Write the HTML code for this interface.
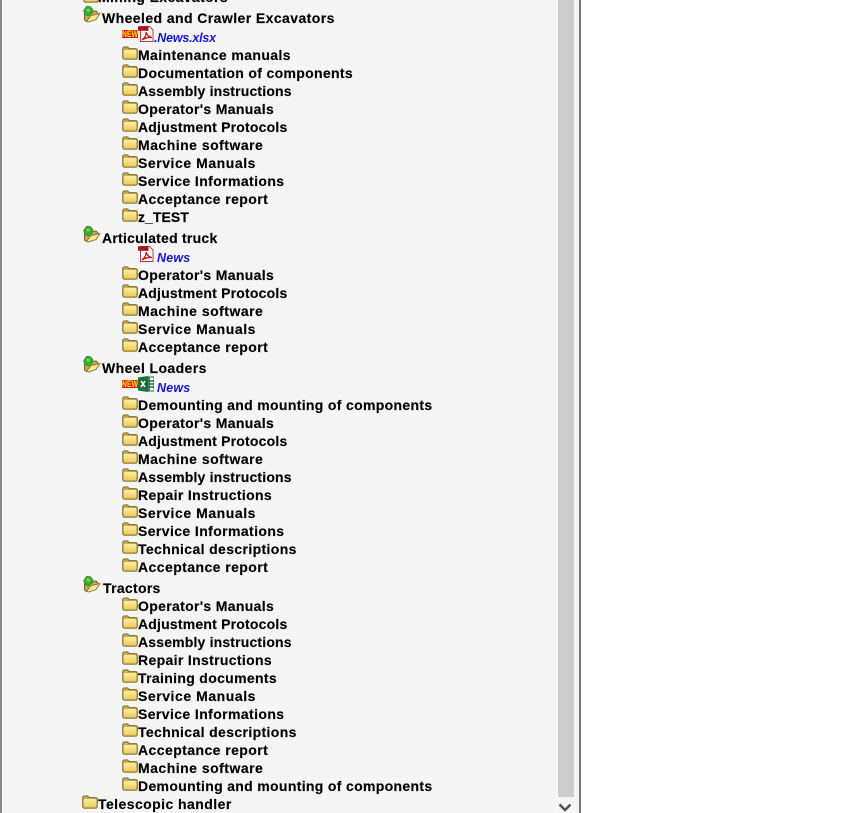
<!DOCTYPE html>
<html><head><meta charset="utf-8">
<style>
html,body{margin:0;padding:0;width:866px;height:813px;overflow:hidden;background:#f5f5f5}
body{position:relative;font-family:"Liberation Sans",Arial,sans-serif}
.t{position:absolute;white-space:nowrap;font-weight:bold;font-size:14px;line-height:16px;color:#000;letter-spacing:.4px;-webkit-text-stroke:.15px #000}
.n{position:absolute;white-space:nowrap;font-weight:bold;font-style:italic;font-size:12.5px;line-height:14px;color:#1515d0}
svg.i{position:absolute;overflow:visible}
.b{position:absolute;top:0;height:813px}
.new{position:absolute;width:16px;height:8px;background:#e01010;overflow:hidden}
.new span{position:absolute;left:0;top:0;color:#ffe81a;font-size:9px;line-height:8px;font-weight:bold;white-space:nowrap;transform-origin:0 0;transform:scaleX(.76)}
.mm{letter-spacing:.39px}.dc{letter-spacing:.33px}.as{letter-spacing:.17px}.op{letter-spacing:.33px}.ad{letter-spacing:.2px}
.ms{letter-spacing:.49px}.sm{letter-spacing:.55px}.si{letter-spacing:.4px}.ar{letter-spacing:.43px}.zt{letter-spacing:.05px}
.rp{letter-spacing:.34px}.td{letter-spacing:.37px}.tr{letter-spacing:.33px}
</style></head><body>
<svg width="0" height="0" style="position:absolute"><defs>
<linearGradient id="g" x1="0" y1="0" x2="0" y2="1"><stop offset="0" stop-color="#fbeda6"/><stop offset="1" stop-color="#eecb58"/></linearGradient>
<symbol id="f" viewBox="0 0 16 14"><path d="M.7 3.2C.7 1.7 1.5 1 2.7 1H5.6L7.2 2.6H13.3C14.7 2.6 15.3 3.3 15.3 4.5V11C15.3 12.5 14.5 13.2 13.1 13.2H2.9C1.5 13.2.7 12.5.7 11Z" fill="#c9ad55" stroke="#8f7a3a" stroke-width="1.2"/><rect x="1.6" y="4" width="12.8" height="8.4" rx="1.6" fill="url(#g)"/></symbol>
<symbol id="o" viewBox="0 0 18 17"><path d="M1.5 8L3 6L13 5L15 7V9.5L7 15.5H3.5L1.5 14Z" fill="#c4a852" stroke="#75632c"/><path d="M3.5 15.5L8 9.5L17 7.5L13 13.5L5.5 16Z" fill="#f8e890" stroke="#85722f" stroke-width=".9"/><path d="M.6 4.4L3.8.2L7.4.6L10 3.6L9.2 7L5.8 9.8L1.8 8.8Z" fill="#3cae2c" stroke="#1f7a18" stroke-width=".6"/><path d="M3.2 3.6L5.5 2.6L7.2 4.2L5 6Z" fill="#7fdc60"/></symbol>
<symbol id="p" viewBox="0 0 16 16"><path d="M2.5 .5H11.5L15 4V15.5H2.5Z" fill="#fff" stroke="#b04040"/><path d="M0 .3H10.5V4.8H0Z" fill="#a3161c"/><path d="M4 14C6.5 12 8.5 9 8 6C9 9 11 11 14 11.5C10.5 11.2 7 12 4 14Z" fill="none" stroke="#c01818" stroke-width="1.3"/></symbol>
<symbol id="x" viewBox="0 0 16 16"><rect x="6" y="1" width="10" height="14" fill="#fff" stroke="#1d6f42"/><path d="M11 1V15M6 5H16M6 8H16M6 11H16" stroke="#1d6f42" stroke-width="1.6"/><path d="M0 1.5L10 0V16L0 14.5Z" fill="#1d6f42"/><path d="M3 5L7 11M7 5L3 11" stroke="#fff" stroke-width="1.5"/></symbol>
</defs></svg>

<div class="b" style="left:0;width:2px;background:#8a8a8a"></div>
<div class="b" style="left:556px;width:2px;background:#f9f9f9"></div>
<div class="b" style="left:558px;width:15.5px;height:797px;background:#cdcdcd"></div>
<div class="b" style="left:579px;width:2px;background:#777"></div>
<div class="b" style="left:581px;width:285px;background:#fff"></div>
<svg class="i" style="left:557px;top:802px" width="16" height="11"><path d="M2.5 2.5L8 8L13.5 2.5" fill="none" stroke="#505050" stroke-width="2.4"/></svg>

<svg class="i" style="left:83px;top:-11px" width="16" height="14"><use href="#f"/></svg>
<div class="t" style="left:98px;top:-11px;letter-spacing:.37px">Mining Excavators</div>

<svg class="i" style="left:83px;top:6px" width="18" height="17"><use href="#o"/></svg>
<div class="t" style="left:102px;top:10px;letter-spacing:.42px">Wheeled and Crawler Excavators</div>
<div class="new" style="left:122px;top:30px"><span>NEW</span></div>
<svg class="i" style="left:138px;top:26px" width="16" height="16"><use href="#p"/></svg>
<div class="n" style="left:154px;top:31px;letter-spacing:-.2px">.News.xlsx</div>
<svg class="i" style="left:122px;top:46px" width="16" height="14"><use href="#f"/></svg><div class="t mm" style="left:138px;top:47px">Maintenance manuals</div>
<svg class="i" style="left:122px;top:64px" width="16" height="14"><use href="#f"/></svg><div class="t dc" style="left:138px;top:65px">Documentation of components</div>
<svg class="i" style="left:122px;top:82px" width="16" height="14"><use href="#f"/></svg><div class="t as" style="left:138px;top:83px">Assembly instructions</div>
<svg class="i" style="left:122px;top:100px" width="16" height="14"><use href="#f"/></svg><div class="t op" style="left:138px;top:101px">Operator's Manuals</div>
<svg class="i" style="left:122px;top:118px" width="16" height="14"><use href="#f"/></svg><div class="t ad" style="left:138px;top:119px">Adjustment Protocols</div>
<svg class="i" style="left:122px;top:136px" width="16" height="14"><use href="#f"/></svg><div class="t ms" style="left:138px;top:137px">Machine software</div>
<svg class="i" style="left:122px;top:154px" width="16" height="14"><use href="#f"/></svg><div class="t sm" style="left:138px;top:155px">Service Manuals</div>
<svg class="i" style="left:122px;top:172px" width="16" height="14"><use href="#f"/></svg><div class="t si" style="left:138px;top:173px">Service Informations</div>
<svg class="i" style="left:122px;top:190px" width="16" height="14"><use href="#f"/></svg><div class="t ar" style="left:138px;top:191px">Acceptance report</div>
<svg class="i" style="left:122px;top:208px" width="16" height="14"><use href="#f"/></svg><div class="t zt" style="left:138px;top:209px">z_TEST</div>

<svg class="i" style="left:83px;top:226px" width="18" height="17"><use href="#o"/></svg>
<div class="t" style="left:102px;top:230px;letter-spacing:.25px">Articulated truck</div>
<svg class="i" style="left:138px;top:246px" width="16" height="16"><use href="#p"/></svg>
<div class="n" style="left:157px;top:251px;letter-spacing:.2px">News</div>
<svg class="i" style="left:122px;top:266px" width="16" height="14"><use href="#f"/></svg><div class="t op" style="left:138px;top:267px">Operator's Manuals</div>
<svg class="i" style="left:122px;top:284px" width="16" height="14"><use href="#f"/></svg><div class="t ad" style="left:138px;top:285px">Adjustment Protocols</div>
<svg class="i" style="left:122px;top:302px" width="16" height="14"><use href="#f"/></svg><div class="t ms" style="left:138px;top:303px">Machine software</div>
<svg class="i" style="left:122px;top:320px" width="16" height="14"><use href="#f"/></svg><div class="t sm" style="left:138px;top:321px">Service Manuals</div>
<svg class="i" style="left:122px;top:338px" width="16" height="14"><use href="#f"/></svg><div class="t ar" style="left:138px;top:339px">Acceptance report</div>

<svg class="i" style="left:83px;top:356px" width="18" height="17"><use href="#o"/></svg>
<div class="t" style="left:102px;top:360px">Wheel Loaders</div>
<div class="new" style="left:122px;top:380px"><span>NEW</span></div>
<svg class="i" style="left:138px;top:376px" width="16" height="16"><use href="#x"/></svg>
<div class="n" style="left:157px;top:381px;letter-spacing:.2px">News</div>
<svg class="i" style="left:122px;top:396px" width="16" height="14"><use href="#f"/></svg><div class="t dc" style="left:138px;top:397px">Demounting and mounting of components</div>
<svg class="i" style="left:122px;top:414px" width="16" height="14"><use href="#f"/></svg><div class="t op" style="left:138px;top:415px">Operator's Manuals</div>
<svg class="i" style="left:122px;top:432px" width="16" height="14"><use href="#f"/></svg><div class="t ad" style="left:138px;top:433px">Adjustment Protocols</div>
<svg class="i" style="left:122px;top:450px" width="16" height="14"><use href="#f"/></svg><div class="t ms" style="left:138px;top:451px">Machine software</div>
<svg class="i" style="left:122px;top:468px" width="16" height="14"><use href="#f"/></svg><div class="t as" style="left:138px;top:469px">Assembly instructions</div>
<svg class="i" style="left:122px;top:486px" width="16" height="14"><use href="#f"/></svg><div class="t rp" style="left:138px;top:487px">Repair Instructions</div>
<svg class="i" style="left:122px;top:504px" width="16" height="14"><use href="#f"/></svg><div class="t sm" style="left:138px;top:505px">Service Manuals</div>
<svg class="i" style="left:122px;top:522px" width="16" height="14"><use href="#f"/></svg><div class="t si" style="left:138px;top:523px">Service Informations</div>
<svg class="i" style="left:122px;top:540px" width="16" height="14"><use href="#f"/></svg><div class="t td" style="left:138px;top:541px">Technical descriptions</div>
<svg class="i" style="left:122px;top:558px" width="16" height="14"><use href="#f"/></svg><div class="t ar" style="left:138px;top:559px">Acceptance report</div>

<svg class="i" style="left:83px;top:576px" width="18" height="17"><use href="#o"/></svg>
<div class="t" style="left:103px;top:580px;letter-spacing:.3px">Tractors</div>
<svg class="i" style="left:122px;top:597px" width="16" height="14"><use href="#f"/></svg><div class="t op" style="left:138px;top:598px">Operator's Manuals</div>
<svg class="i" style="left:122px;top:615px" width="16" height="14"><use href="#f"/></svg><div class="t ad" style="left:138px;top:616px">Adjustment Protocols</div>
<svg class="i" style="left:122px;top:633px" width="16" height="14"><use href="#f"/></svg><div class="t as" style="left:138px;top:634px">Assembly instructions</div>
<svg class="i" style="left:122px;top:651px" width="16" height="14"><use href="#f"/></svg><div class="t rp" style="left:138px;top:652px">Repair Instructions</div>
<svg class="i" style="left:122px;top:669px" width="16" height="14"><use href="#f"/></svg><div class="t tr" style="left:138px;top:670px">Training documents</div>
<svg class="i" style="left:122px;top:687px" width="16" height="14"><use href="#f"/></svg><div class="t sm" style="left:138px;top:688px">Service Manuals</div>
<svg class="i" style="left:122px;top:705px" width="16" height="14"><use href="#f"/></svg><div class="t si" style="left:138px;top:706px">Service Informations</div>
<svg class="i" style="left:122px;top:723px" width="16" height="14"><use href="#f"/></svg><div class="t td" style="left:138px;top:724px">Technical descriptions</div>
<svg class="i" style="left:122px;top:741px" width="16" height="14"><use href="#f"/></svg><div class="t ar" style="left:138px;top:742px">Acceptance report</div>
<svg class="i" style="left:122px;top:759px" width="16" height="14"><use href="#f"/></svg><div class="t ms" style="left:138px;top:760px">Machine software</div>
<svg class="i" style="left:122px;top:777px" width="16" height="14"><use href="#f"/></svg><div class="t dc" style="left:138px;top:778px">Demounting and mounting of components</div>

<svg class="i" style="left:82px;top:795px" width="16" height="14"><use href="#f"/></svg>
<div class="t" style="left:98px;top:796px;letter-spacing:.44px">Telescopic handler</div>
</body></html>
